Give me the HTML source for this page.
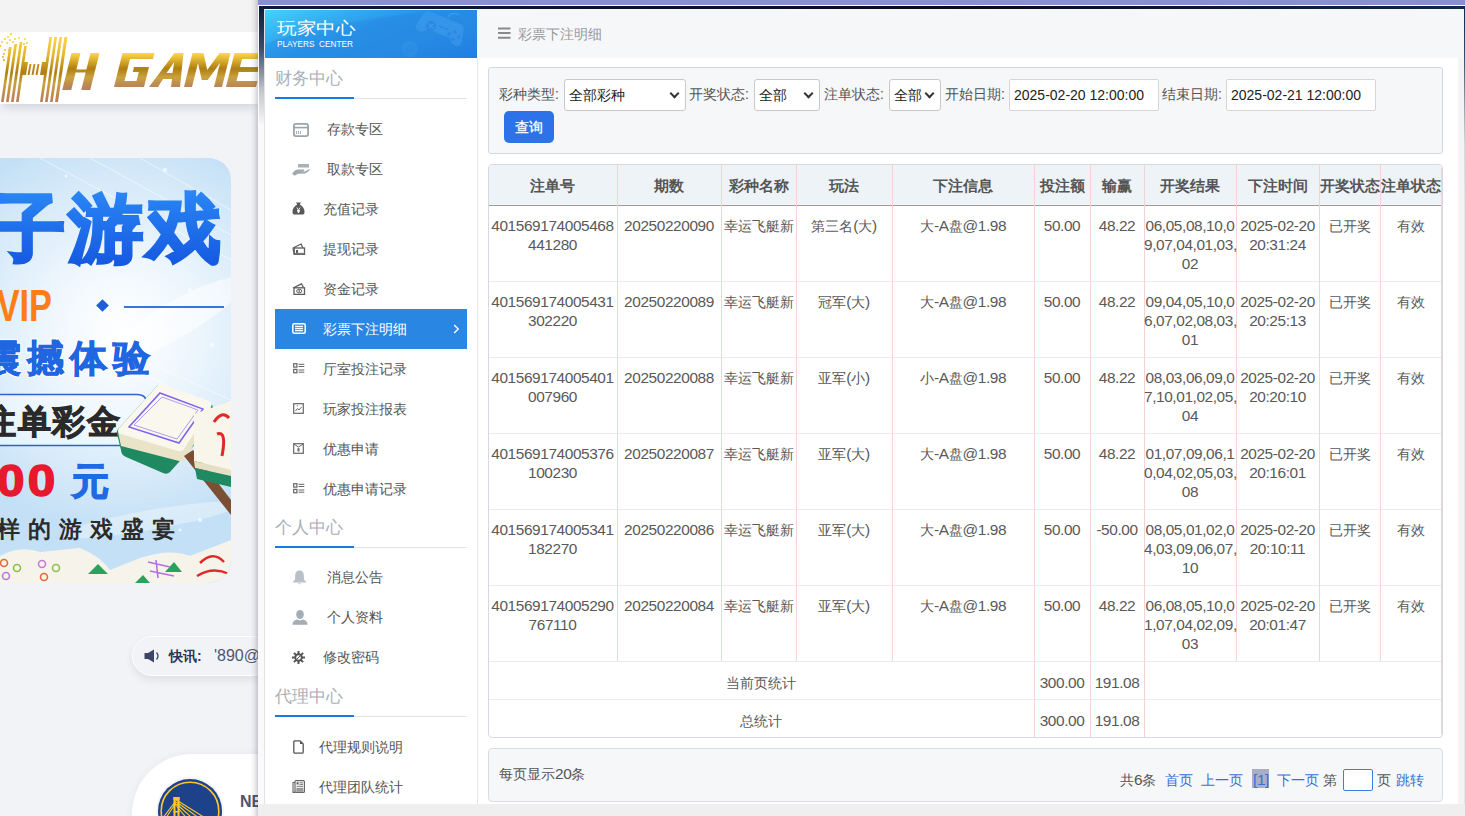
<!DOCTYPE html>
<html><head><meta charset="utf-8">
<style>
*{box-sizing:border-box;margin:0;padding:0}
html,body{width:1465px;height:816px;overflow:hidden}
body{position:relative;background:#f2f3f7;font-family:"Liberation Sans",sans-serif;font-size:14px;color:#555}
.abs{position:absolute}
/* left page */
#topgray{left:0;top:0;width:258px;height:32px;background:#f3f3f3}
#logobar{left:0;top:32px;width:258px;height:72px;background:#fff;box-shadow:0 6px 9px -3px rgba(30,30,50,.16)}
#banner{left:0;top:158px;width:231px;height:425px;border-radius:0 22px 22px 0;overflow:hidden;
  background:radial-gradient(ellipse 120px 160px at 110px 250px,#ffffff 0%,#eef6fd 45%,#cfe5f8 100%)}
#pill{left:132px;top:636px;width:140px;height:40px;border-radius:20px;background:#f2f3f7;border:1px solid #fff;box-shadow:0 4px 8px rgba(0,0,0,.08)}
#card{left:132px;top:754px;width:140px;height:120px;border-radius:60px 0 0 0;background:#fff;box-shadow:0 0 10px rgba(0,0,0,.05)}
#mshadow{left:250px;top:0;width:8px;height:816px;background:linear-gradient(to right,rgba(40,40,60,0),rgba(40,40,60,.06) 50%,rgba(40,40,60,.22))}
/* modal */
#purple{left:258px;top:0;width:1207px;height:5px;background:#8890d0}
#wline{left:258px;top:5px;width:1207px;height:1px;background:#fff}
#frame{left:258px;top:6px;width:1207px;height:810px;background:#fff}
#dtop{left:259px;top:6px;width:1206px;height:3px;background:linear-gradient(to right,#0a1a3a,#0b0f25 40%,#0a0a1a 60%,#0a2a4a)}
#dleft{left:259px;top:6px;width:5px;height:120px;background:linear-gradient(to bottom,#0a1a3a,#3a4a6a 35%,#c0c4cc 70%,#fafafa)}
#lstrip{left:258px;top:126px;width:6px;height:678px;background:#fafafa}
#lline{left:264px;top:9px;width:1px;height:795px;background:#e2e2e2}
#dright{left:1464px;top:6px;width:1px;height:800px;background:linear-gradient(to bottom,#0a2a4a 0px,#3a4a64 50px,#9aa0aa 100px,#d8d8dc 140px,#e6e6e6 200px)}
#sidebar{left:265px;top:9px;width:212px;height:795px;background:#fff}
#sbhead{left:265px;top:10px;width:212px;height:48px;overflow:hidden;
  background:linear-gradient(160deg,#45d2f7 0%,#34aef0 25%,#2a94e8 45%,#2a8fe6 70%,#2080e2 100%)}
#sbline{left:477px;top:58px;width:1px;height:746px;background:#e6e9ec}
#content{left:478px;top:9px;width:980px;height:795px;background:#fff}
#crumb{left:477px;top:9px;width:987px;height:49px;background:#f6f7f9}
#scroll{left:1458px;top:58px;width:6px;height:746px;background:#f4f4f4}
#bottomgray{left:258px;top:804px;width:1207px;height:12px;background:#efefef}
.sec{position:absolute;left:275px;font-size:17px;color:#a9b0b8;line-height:20px}
.ul{position:absolute;left:275px;width:192px;height:1px;background:#dfe2e6}
.ulb{position:absolute;left:275px;width:79px;height:2px;background:#1b7ae0}
.mi{position:absolute;font-size:14px;color:#555;line-height:16px;white-space:nowrap}
.ic{position:absolute}

.ql{color:#555}
.sel{position:absolute;top:79px;height:32px;background:#fff;border:1px solid #c9c9c9;border-radius:3px;font-size:14px;color:#222;line-height:16px}
.sel span{position:absolute;left:4px;top:7px;white-space:nowrap}
.sel:after{content:"";position:absolute;right:7px;top:10px;width:5px;height:5px;border-right:2px solid #333;border-bottom:2px solid #333;transform:rotate(45deg)}
.inp{position:absolute;top:79px;height:32px;background:#fff;border:1px solid #d6d6d6;border-radius:2px;font-size:14px;color:#222;line-height:16px;padding:7px 0 0 4px;white-space:nowrap}

.th{position:absolute;top:178px;text-align:center;font-size:14.5px;line-height:16px;font-weight:bold;color:#555;white-space:nowrap}
.td{position:absolute;text-align:center;font-size:14px;line-height:19px;color:#595959;white-space:nowrap}
.n{font-size:15.4px;letter-spacing:-0.4px;line-height:0}
</style></head><body>
<div class="abs" id="topgray"></div>
<div class="abs" id="logobar"></div>
<div class="abs" id="banner"></div>
<div class="abs" id="pill"></div>
<div class="abs" id="card"></div>

<!-- logo -->
<svg class="abs" style="left:0;top:32px" width="258" height="72" viewBox="0 32 258 72">
 <defs>
  <linearGradient id="gold" x1="0" y1="36" x2="0" y2="102" gradientUnits="userSpaceOnUse">
   <stop offset="0" stop-color="#ffd84a"/><stop offset="0.3" stop-color="#e3b52e"/><stop offset="0.55" stop-color="#b07e12"/><stop offset="0.72" stop-color="#c9a23f"/><stop offset="0.9" stop-color="#c0874f"/><stop offset="1" stop-color="#b8805c"/>
  </linearGradient>
  <linearGradient id="gold2" x1="0" y1="53" x2="0" y2="88" gradientUnits="userSpaceOnUse">
   <stop offset="0" stop-color="#ffd84a"/><stop offset="0.45" stop-color="#b07e12"/><stop offset="0.7" stop-color="#c9a23f"/><stop offset="1" stop-color="#b8805c"/>
  </linearGradient>
 </defs>
 <g fill="url(#gold)">
  <path d="M1.0 102 L3.7 102 L11.7 47 L9.0 47Z"/><path d="M6.0 102 L8.7 102 L17.1 44 L14.4 44Z"/><path d="M11.0 102 L13.7 102 L22.4 42 L19.7 42Z"/><path d="M16.0 102 L18.7 102 L26.8 46 L24.1 46Z"/>
  <path d="M40.0 102 L42.7 102 L52.1 37 L49.4 37Z"/><path d="M45.0 102 L47.7 102 L57.1 37 L54.4 37Z"/><path d="M50.0 102 L52.7 102 L62.1 37 L59.4 37Z"/><path d="M55.0 102 L58.0 102 L67.4 37 L64.4 37Z"/>
  <path d="M21 75 L23 62 L28 62 L26 75Z"/><path d="M27.5 75 L29.5 64 L31.5 64 L29.5 75Z"/><path d="M31.5 75 L33.5 64 L35.5 64 L33.5 75Z"/><path d="M35.5 75 L37.5 64 L39.5 64 L37.5 75Z"/><path d="M40 75 L42 62 L47 62 L45 75Z"/>
  <circle cx="11" cy="34" r="1.2"/><circle cx="8" cy="37" r="1.1"/><circle cx="5" cy="39" r="1.1"/><circle cx="10" cy="40" r="1"/><circle cx="15" cy="39" r="1"/><circle cx="19" cy="38" r="1"/><circle cx="25" cy="39" r="1"/><circle cx="2" cy="42" r="1"/><circle cx="7" cy="43" r="1"/><circle cx="13" cy="42" r="1"/><circle cx="24" cy="44" r="1"/><circle cx="27" cy="43" r="1"/><circle cx="0.5" cy="46" r="1"/><circle cx="5" cy="50" r="1"/><circle cx="9" cy="50" r="1"/><circle cx="4" cy="54" r="1"/><circle cx="3" cy="57" r="1"/><circle cx="4" cy="60" r="1"/>
 </g>
 <g fill="url(#gold2)" transform="translate(21.7 0) skewX(-14)">
  <!-- H -->
  <path d="M63 90 L72 90 L72 72.5 L82 72.5 L82 90 L91 90 L91 53 L82 53 L82 69.5 L72 69.5 L72 53 L63 53Z"/>
  <!-- G -->
  <path d="M114 87 L144 87 L144 67 L129 67 L129 72 L135 72 L135 81 L123 81 L123 59 L146 59 L146 53 L114 53Z"/>
  <!-- A -->
  <path d="M149 87 L158 87 L161 79 L170 79 L171 87 L180 87 L175 53 L166 53Z M163 73 L169 73 L168 62Z" fill-rule="evenodd"/>
  <!-- M -->
  <path d="M184 87 L192 87 L192 63 L200 80 L206 80 L214 63 L214 87 L222 87 L222 53 L211 53 L203 70 L195 53 L184 53Z"/>
  <!-- E -->
  <path d="M226 87 L256 87 L256 81 L235 81 L235 72 L254 72 L254 67 L235 67 L235 59 L258 59 L258 53 L226 53Z"/>
 </g>
</svg>

<!-- banner -->
<svg class="abs" style="left:0;top:158px" width="231" height="425" viewBox="0 158 231 425">
 <defs>
  <clipPath id="bclip"><path d="M0 158 H205 Q231 158 231 184 V557 Q231 583 205 583 H0Z"/></clipPath>
  <radialGradient id="bbg" cx="120" cy="330" r="200" gradientUnits="userSpaceOnUse">
   <stop offset="0" stop-color="#ffffff"/><stop offset="0.35" stop-color="#eff7fd"/><stop offset="0.75" stop-color="#d6eaf9"/><stop offset="1" stop-color="#c4e0f6"/>
  </radialGradient>
  <linearGradient id="blue" x1="0" y1="191" x2="0" y2="265" gradientUnits="userSpaceOnUse"><stop offset="0" stop-color="#2a86f5"/><stop offset="1" stop-color="#1559e0"/></linearGradient>
 </defs>
 <g clip-path="url(#bclip)">
  <rect x="0" y="158" width="231" height="425" fill="url(#bbg)"/>
  <ellipse cx="175" cy="320" rx="80" ry="18" fill="#ffffff" opacity="0.55" transform="rotate(-30 175 320)"/>
  <ellipse cx="150" cy="520" rx="90" ry="10" fill="#ffffff" opacity="0.35" transform="rotate(-10 150 520)"/>
  <g stroke="#ffffff" stroke-width="1" opacity="0.5">
   <path d="M40 158 L231 260"/><path d="M90 158 L231 235"/><path d="M140 158 L231 210"/><path d="M60 330 L231 420"/><path d="M120 350 L231 400"/>
  </g>
  <g fill="#ffffff" opacity="0.7"><circle cx="165" cy="170" r="2"/><circle cx="66" cy="176" r="1.5"/><circle cx="190" cy="290" r="2"/><circle cx="212" cy="345" r="2"/><circle cx="200" cy="520" r="2"/><circle cx="180" cy="530" r="1.5"/></g>
  <text x="-9" y="254" font-size="74" font-weight="bold" fill="url(#blue)" stroke="url(#blue)" stroke-width="3.5" letter-spacing="4">子游戏</text>
  <text x="0" y="0" font-size="44" font-weight="bold" fill="#ff7d14" text-anchor="end" font-family="Liberation Sans" transform="translate(52 321) scale(0.78 1.02)">VIP</text>
  <rect x="98" y="301" width="9" height="9" fill="#1f5fd6" transform="rotate(45 102.5 305.5)"/>
  <rect x="124" y="306" width="100" height="2" fill="#3a74d8"/>
  <text x="-16" y="371" font-size="37" font-weight="bold" fill="#1f66e0" stroke="#ffffff" stroke-width="3" paint-order="stroke" letter-spacing="6">震撼体验</text><text x="-16" y="371" font-size="37" font-weight="bold" fill="#1f66e0" stroke="#1f66e0" stroke-width="1" letter-spacing="6">震撼体验</text>
  <path d="M0 394.5 H137 Q147 394.5 147 404.5 V435.5 Q147 445.5 137 445.5 H0" fill="#f5fbff" fill-opacity="0.55" stroke="#2d62cf" stroke-width="1.6"/>
  <text x="-17" y="433" font-size="33" font-weight="bold" fill="#2a2a2a" stroke="#2a2a2a" stroke-width="1" letter-spacing="1.5">注单彩金</text>
  <text x="0" y="0" font-size="45" font-weight="bold" fill="#e8182e" stroke="#e8182e" stroke-width="1.5" font-family="Liberation Sans" letter-spacing="3" transform="translate(-3 496) scale(1.1 1)">00</text>
  <text x="72" y="494" font-size="37" font-weight="bold" fill="#1f6ae3" stroke="#1f6ae3" stroke-width="1.5">元</text>
  <text x="-3" y="537" font-size="23" font-weight="bold" fill="#2b2b2b" letter-spacing="8">样的游戏盛宴</text>
  <!-- tiles -->
  <path d="M158 385 L211 404 Q214 406 212 410 L206 432 L170 472 Q167 475 163 473 L126 457 Q121 455 121 450 L117 434 Q116 431 119 428Z" fill="#1f8a62"/>
  <path d="M118 432 L181 451 L211 404 L209 420 L183 462 L121 446Z" fill="#e9e4c8"/>
  <path d="M158 385 Q161 383 165 385 L209 401 Q213 403 211 407 L184 449 Q182 452 178 451 L121 434 Q116 432 119 428Z" fill="#faf8ee"/>
  <path d="M160 393 L203 409 L179 443 L129 427Z" fill="none" stroke="#7e64ea" stroke-width="1.5"/>
  <path d="M162 397 L198 410 L177 439 L134 425Z" fill="none" stroke="#9a85f0" stroke-width="0.8"/>
  <path d="M184 456 L193 450 L231 500 V515Z" fill="#7a4f33"/>
  <path d="M194 414 L231 401 V470 L194 461Z" fill="#f8f6ea"/>
  <path d="M194 461 L231 470 V476 L195 468Z" fill="#e5e0c4"/>
  <path d="M195 468 L231 476 V487 L197 479Z" fill="#1f8a62"/>
  <path d="M214 422 Q222 410 229 418 M217 434 Q227 430 222 456" stroke="#e02a2a" stroke-width="3" fill="none"/>
  <path d="M0 556 Q20 545 40 552 L80 548 Q100 556 110 570 L140 558 Q170 548 190 556 L231 540 V583 H0Z" fill="#f6f4ea"/>
  <path d="M88 574 L98 564 L108 574Z M165 572 L174 562 L182 572Z M135 583 L143 575 L150 583Z" fill="#29a35c"/>
  <g fill="none" stroke-width="1.6"><circle cx="4" cy="563" r="3.5" stroke="#e06a3c"/><circle cx="17" cy="568" r="3.5" stroke="#8bbf48"/><circle cx="6" cy="576" r="3.5" stroke="#b879d8"/><circle cx="42" cy="564" r="3.5" stroke="#c879d8"/><circle cx="56" cy="568" r="3.5" stroke="#8bbf48"/><circle cx="44" cy="577" r="3.5" stroke="#e06a3c"/><path d="M148 562 L170 567 M150 571 L174 576 M156 560 L158 578" stroke="#b76fe0"/><path d="M200 563 Q213 550 224 562 M197 576 Q213 566 229 574" stroke="#e02a2a" stroke-width="2.5"/></g>
 </g>
</svg>

<!-- pill -->
<svg class="ic" style="left:144px;top:649px" width="17" height="14" viewBox="0 0 17 14"><path d="M0.5 4 H4 L10 0.5 V13.5 L4 10 H0.5Z" fill="#3d4666"/><path d="M12.5 3.5 Q15.5 7 12.5 10.5" fill="none" stroke="#3d4666" stroke-width="1.3"/></svg>
<div class="mi" style="left:169px;top:648px;color:#2f3752;font-weight:bold">快讯:</div>
<div class="abs" style="left:214px;top:646px;width:44px;overflow:hidden;font-size:16px;line-height:20px;color:#4f5672;white-space:nowrap">'890@gmail</div>

<!-- card -->
<svg class="abs" style="left:150px;top:771px" width="80" height="80" viewBox="0 0 80 80">
 <circle cx="40" cy="40" r="34" fill="#f4f4f4"/>
 <circle cx="40" cy="40" r="32" fill="#1d428a"/>
 <circle cx="40" cy="40" r="28.8" fill="none" stroke="#ffc72c" stroke-width="1.6"/>
 <g fill="#ffc72c"><rect x="23.5" y="26" width="2" height="40"/><rect x="27.5" y="26" width="2" height="40"/><rect x="23.5" y="26" width="6" height="3"/><rect x="23.5" y="33" width="6" height="1.5"/><rect x="23.5" y="40" width="6" height="1.5"/></g>
 <g stroke="#ffc72c" stroke-width="1.1" fill="none"><path d="M26.5 29 L6 56"/><path d="M26.5 31 L10 56"/><path d="M26.5 29 L60 50"/><path d="M26.5 31 L56 52"/><path d="M26.5 33 L50 54"/><path d="M26.5 35 L44 56"/></g>
</svg>
<div class="abs" style="left:240px;top:793px;font-size:16px;line-height:18px;font-weight:bold;color:#50546e;white-space:nowrap;width:18px;overflow:hidden">NBA</div>

<div class="abs" id="mshadow"></div>

<div class="abs" id="purple"></div>
<div class="abs" id="wline"></div>
<div class="abs" id="frame"></div>
<div class="abs" id="dtop"></div>
<div class="abs" id="dleft"></div>
<div class="abs" id="lstrip"></div>
<div class="abs" id="lline"></div>
<div class="abs" id="dright"></div>
<div class="abs" id="sidebar"></div>
<div class="abs" id="sbhead"></div>
<div class="abs" id="sbline"></div>
<div class="abs" id="content"></div>
<div class="abs" id="crumb"></div>
<div class="abs" id="scroll"></div>
<div class="abs" id="bottomgray"></div>

<!-- sidebar header -->
<svg class="abs" style="left:265px;top:10px" width="212" height="48" viewBox="0 0 212 48">
 <path d="M0 48 L0 34 Q70 8 212 -2 L212 48 Z" fill="#1f7fe0" opacity="0.28"/>
 <g transform="rotate(22 176 18)">
  <path d="M154 12 Q155 7 162 7 L190 7 Q197 7 198 12 L200 23 Q201 29 195 29 Q191 29 188 24 L164 24 Q161 29 157 29 Q151 29 152 23Z" fill="#4aa6f0" opacity="0.4"/>
 </g>
 <circle cx="166" cy="16" r="5" fill="#2a84e0" opacity="0.75"/>
 <path d="M163.5 13.5 L168.5 18.5 M168.5 13.5 L163.5 18.5" stroke="#4aa6f0" stroke-width="1.1" opacity="0.6"/>
 <g fill="#2a84e0" opacity="0.75"><circle cx="184" cy="24" r="1.7"/><circle cx="190" cy="22" r="1.7"/><circle cx="188" cy="29" r="1.7"/><circle cx="194" cy="27" r="1.7"/><rect x="174" y="16" width="4" height="1.5" transform="rotate(22 176 17)"/><rect x="179" y="18" width="4" height="1.5" transform="rotate(22 181 19)"/></g>
 <path d="M183 7 Q187 1 194 5" stroke="#5ab0f2" stroke-width="1.2" fill="none" opacity="0.5"/>
 <circle cx="145" cy="39" r="8" fill="#4aa6f0" opacity="0.2"/>
 <circle cx="145" cy="39" r="4" fill="#2a84e0" opacity="0.25"/>
</svg>
<div class="abs" style="left:277px;top:19px;font-size:17px;line-height:20px;color:#fff;transform:scaleX(1.15);transform-origin:0 0;white-space:nowrap">玩家中心</div>
<div class="abs" style="left:277px;top:39px;font-size:8.6px;line-height:10px;color:#fff;font-weight:normal;white-space:nowrap;transform:scaleX(0.96);transform-origin:0 0;">PLAYERS&nbsp; CENTER</div>

<!-- sections -->
<div class="sec" style="top:69px">财务中心</div>
<div class="ul" style="top:98px"></div><div class="ulb" style="top:97px"></div>

<svg class="ic" style="left:293px;top:123px" width="16" height="14" viewBox="0 0 16 14"><rect x="0.9" y="0.9" width="14.2" height="12.2" rx="2" fill="none" stroke="#9aa3ab" stroke-width="1.8"/><line x1="1" y1="4.6" x2="15" y2="4.6" stroke="#9aa3ab" stroke-width="1.6"/><path d="M3.6 8v3M5.6 8v3M7.6 8v3" stroke="#9aa3ab" stroke-width="0.9"/></svg>
<div class="mi" style="left:327px;top:121px">存款专区</div>

<svg class="ic" style="left:291px;top:163px" width="20" height="13" viewBox="0 0 20 13"><rect x="7" y="1" width="11" height="3.5" fill="#a8b0b8"/><path d="M1 10.5 L4 7.5 Q6 6 9 6.5 L13 6.5 Q14 7.5 12.5 8.2 L9 8.4 L14 8.4 L18.5 6 L19 6.5 Q17 9.5 14 10.5 L7 10.8 L3.5 12.8 Z" fill="#a0a8b0"/></svg>
<div class="mi" style="left:327px;top:161px">取款专区</div>

<svg class="ic" style="left:292px;top:202px" width="13" height="13" viewBox="0 0 13 13"><path d="M4 0.5 L9 0.5 L7.8 2.5 Q12.5 5 12.5 10 Q12.5 12.6 10 12.6 L3 12.6 Q0.5 12.6 0.5 10 Q0.5 5 5.2 2.5 Z" fill="#595959"/><path d="M4.8 5.5 L6.5 8 L8.2 5.5 M6.5 8 V11 M5 8.5 H8 M5 9.8 H8" stroke="#fff" stroke-width="0.9" fill="none"/></svg>
<div class="mi" style="left:323px;top:201px">充值记录</div>

<svg class="ic" style="left:292px;top:243px" width="14" height="12" viewBox="0 0 14 12"><path d="M1 5 L9 1 L11 5" fill="none" stroke="#5c5c5c" stroke-width="1.3"/><rect x="2.2" y="5" width="10.3" height="6.3" fill="none" stroke="#5c5c5c" stroke-width="1.3"/><path d="M1 5 L2.2 11.3" stroke="#5c5c5c" stroke-width="1.2"/><rect x="4" y="7" width="2" height="3" fill="#5c5c5c"/><line x1="3" y1="10.6" x2="12" y2="10.6" stroke="#777" stroke-width="1.4"/></svg>
<div class="mi" style="left:323px;top:241px">提现记录</div>

<svg class="ic" style="left:292px;top:283px" width="14" height="12" viewBox="0 0 14 12"><path d="M1 5 L9.5 0.8 L11.5 4.5" fill="none" stroke="#5c5c5c" stroke-width="1.3"/><rect x="2" y="4.8" width="10.5" height="6.6" fill="none" stroke="#5c5c5c" stroke-width="1.3"/><ellipse cx="7.2" cy="8.1" rx="2.6" ry="1.9" fill="none" stroke="#5c5c5c" stroke-width="1"/><rect x="6.6" y="7" width="1.2" height="2.2" fill="#5c5c5c"/></svg>
<div class="mi" style="left:323px;top:281px">资金记录</div>

<div class="abs" style="left:275px;top:309px;width:192px;height:40px;background:#2a86e3"></div>
<svg class="ic" style="left:292px;top:323px" width="14" height="11" viewBox="0 0 14 11"><rect x="0.8" y="0.8" width="12.4" height="9.4" rx="1.5" fill="none" stroke="#fff" stroke-width="1.5"/><path d="M3 3.4H11M3 5.5H11M3 7.6H11" stroke="#fff" stroke-width="1.3"/></svg>
<div class="mi" style="left:323px;top:321px;color:#fff">彩票下注明细</div>
<svg class="ic" style="left:453px;top:324px" width="7" height="10" viewBox="0 0 7 10"><path d="M1.2 1 L5.2 5 L1.2 9" fill="none" stroke="#fff" stroke-width="1.4"/></svg>

<svg class="ic" style="left:293px;top:363px" width="12" height="11" viewBox="0 0 12 11"><rect x="0.7" y="0.7" width="3.2" height="3.4" fill="none" stroke="#666" stroke-width="1.2"/><rect x="0.7" y="6.4" width="3.2" height="3.4" fill="none" stroke="#666" stroke-width="1.2"/><path d="M5.6 1.3H11.3M5.6 3.5H11.3M5.6 7H11.3M5.6 9.2H11.3" stroke="#666" stroke-width="1"/></svg>
<div class="mi" style="left:323px;top:361px">厅室投注记录</div>

<svg class="ic" style="left:293px;top:403px" width="11" height="11" viewBox="0 0 11 11"><rect x="0.7" y="0.7" width="9.6" height="9.6" fill="none" stroke="#666" stroke-width="1.2"/><path d="M2.5 8 L4.5 5.5 L6 7 L8.6 4" fill="none" stroke="#666" stroke-width="1"/><circle cx="4.3" cy="2.8" r="0.6" fill="#666"/></svg>
<div class="mi" style="left:323px;top:401px">玩家投注报表</div>

<svg class="ic" style="left:293px;top:443px" width="11" height="11" viewBox="0 0 11 11"><rect x="0.7" y="0.7" width="9.6" height="9.6" fill="none" stroke="#666" stroke-width="1.2"/><path d="M1 1.2 L5.5 4 L10 1.2" fill="none" stroke="#666" stroke-width="1"/><ellipse cx="5.5" cy="6.8" rx="1.3" ry="2" fill="#777"/></svg>
<div class="mi" style="left:323px;top:441px">优惠申请</div>

<svg class="ic" style="left:293px;top:483px" width="12" height="11" viewBox="0 0 12 11"><rect x="0.7" y="0.7" width="3.2" height="3.4" fill="none" stroke="#666" stroke-width="1.2"/><rect x="0.7" y="6.4" width="3.2" height="3.4" fill="none" stroke="#666" stroke-width="1.2"/><path d="M5.6 1.3H11.3M5.6 3.5H11.3M5.6 7H11.3M5.6 9.2H11.3" stroke="#666" stroke-width="1"/></svg>
<div class="mi" style="left:323px;top:481px">优惠申请记录</div>

<div class="sec" style="top:518px">个人中心</div>
<div class="ul" style="top:547px"></div><div class="ulb" style="top:546px"></div>

<svg class="ic" style="left:292px;top:570px" width="15" height="15" viewBox="0 0 15 15"><path d="M7.5 0.5 Q11.5 0.5 11.8 5 L12 9.5 L14.5 12.5 L0.5 12.5 L3 9.5 L3.2 5 Q3.5 0.5 7.5 0.5Z" fill="#b9c0c7"/><path d="M6 13.3 H9 L7.5 14.5Z" fill="#b9c0c7"/></svg>
<div class="mi" style="left:327px;top:569px">消息公告</div>

<svg class="ic" style="left:292px;top:610px" width="16" height="15" viewBox="0 0 16 15"><ellipse cx="8" cy="4.5" rx="3.8" ry="4.5" fill="#a3adb6"/><path d="M0.5 14.8 Q0.5 10.5 5 9.6 L8 10.5 L11 9.6 Q15.5 10.5 15.5 14.8Z" fill="#a3adb6"/></svg>
<div class="mi" style="left:327px;top:609px">个人资料</div>

<svg class="ic" style="left:292px;top:651px" width="13" height="13" viewBox="0 0 13 13"><g fill="#555"><circle cx="6.5" cy="6.5" r="4.2"/><rect x="5.5" y="0" width="2" height="13"/><rect x="0" y="5.5" width="13" height="2"/><rect x="5.5" y="0" width="2" height="13" transform="rotate(45 6.5 6.5)"/><rect x="5.5" y="0" width="2" height="13" transform="rotate(-45 6.5 6.5)"/></g><circle cx="6.5" cy="6.5" r="2.3" fill="#fff"/><path d="M5 8 L8 5" stroke="#555" stroke-width="1"/></svg>
<div class="mi" style="left:323px;top:649px">修改密码</div>

<div class="sec" style="top:687px">代理中心</div>
<div class="ul" style="top:716px"></div><div class="ulb" style="top:715px"></div>

<svg class="ic" style="left:293px;top:740px" width="11" height="14" viewBox="0 0 11 14"><path d="M1.7 0.8 H7 L10.2 4 V12 Q10.2 13.2 9 13.2 H1.9 Q0.8 13.2 0.8 12 V1.9 Q0.8 0.8 1.7 0.8Z" fill="none" stroke="#555" stroke-width="1.3"/><path d="M7 0.8 V4 H10.2Z" fill="#555"/></svg>
<div class="mi" style="left:319px;top:739px">代理规则说明</div>

<svg class="ic" style="left:292px;top:780px" width="13" height="13" viewBox="0 0 13 13"><rect x="3" y="0.6" width="9.4" height="11.8" rx="1" fill="none" stroke="#666" stroke-width="1.2"/><path d="M3 2.5 H1 V12.4 H3" fill="none" stroke="#666" stroke-width="1.1"/><rect x="4.6" y="2.3" width="2" height="2.2" fill="#555"/><path d="M7.5 2.8H11M7.5 4.4H11M4.5 6.3H11" stroke="#666" stroke-width="0.9"/><rect x="4.3" y="7.8" width="7" height="4" fill="#999"/></svg>
<div class="mi" style="left:319px;top:779px">代理团队统计</div>



<!-- crumb -->
<svg class="ic" style="left:498px;top:27px" width="13" height="12" viewBox="0 0 13 12"><path d="M0 1.5H12.5M0 6H12.5M0 10.8H12.5" stroke="#8a8a8a" stroke-width="2"/></svg>
<div class="mi" style="left:518px;top:26px;color:#999">彩票下注明细</div>

<!-- query -->
<div class="abs" style="left:488px;top:67px;width:955px;height:87px;background:#f6f7f9;border:1px solid #d3d9df;border-radius:3px"></div>
<div class="mi ql" style="left:499px;top:86px">彩种类型:</div>
<div class="sel" style="left:564px;width:122px"><span>全部彩种</span></div>
<div class="mi ql" style="left:689px;top:86px">开奖状态:</div>
<div class="sel" style="left:754px;width:66px"><span>全部</span></div>
<div class="mi ql" style="left:824px;top:86px">注单状态:</div>
<div class="sel" style="left:889px;width:52px"><span>全部</span></div>
<div class="mi ql" style="left:945px;top:86px">开始日期:</div>
<div class="inp" style="left:1009px;width:150px">2025-02-20 12:00:00</div>
<div class="mi ql" style="left:1162px;top:86px">结束日期:</div>
<div class="inp" style="left:1226px;width:150px">2025-02-21 12:00:00</div>
<div class="abs" style="left:504px;top:111px;width:50px;height:32px;background:#2d72e8;border-radius:5px"></div>
<div class="mi" style="left:515px;top:119px;color:#fff;-webkit-text-stroke:0.3px #fff">查询</div>
<!--TABLE-->
<div class="abs" style="left:488px;top:164px;width:955px;height:574px;border:1px solid #d3d9de;border-radius:4px;background:#fff;overflow:hidden">
<div class="abs" style="left:0;top:0;width:953px;height:40px;background:#eef3f7"></div>
</div>
<div class="abs" style="left:489px;top:204px;width:952px;height:1px;background:#f5f8fb"></div>
<div class="abs" style="left:489px;top:205px;width:952px;height:1px;background:#9e9797"></div>
<div class="abs" style="left:489px;top:281px;width:952px;height:1px;background:#ebebeb"></div>
<div class="abs" style="left:489px;top:357px;width:952px;height:1px;background:#ebebeb"></div>
<div class="abs" style="left:489px;top:433px;width:952px;height:1px;background:#ebebeb"></div>
<div class="abs" style="left:489px;top:509px;width:952px;height:1px;background:#ebebeb"></div>
<div class="abs" style="left:489px;top:585px;width:952px;height:1px;background:#ebebeb"></div>
<div class="abs" style="left:489px;top:661px;width:952px;height:1px;background:#ebebeb"></div>
<div class="abs" style="left:489px;top:699px;width:952px;height:1px;background:#ebebeb"></div>
<div class="abs" style="left:617px;top:165px;width:1px;height:496px;background:#f3d3d5"></div>
<div class="abs" style="left:721px;top:165px;width:1px;height:496px;background:#f3d3d5"></div>
<div class="abs" style="left:796px;top:165px;width:1px;height:496px;background:#f3d3d5"></div>
<div class="abs" style="left:892px;top:165px;width:1px;height:496px;background:#f3d3d5"></div>
<div class="abs" style="left:1034px;top:165px;width:1px;height:572px;background:#f3d3d5"></div>
<div class="abs" style="left:1090px;top:165px;width:1px;height:572px;background:#f3d3d5"></div>
<div class="abs" style="left:1144px;top:165px;width:1px;height:572px;background:#f3d3d5"></div>
<div class="abs" style="left:1236px;top:165px;width:1px;height:496px;background:#f3d3d5"></div>
<div class="abs" style="left:1319px;top:165px;width:1px;height:496px;background:#f3d3d5"></div>
<div class="abs" style="left:1380px;top:165px;width:1px;height:496px;background:#f3d3d5"></div>
<div class="abs" style="left:1441px;top:168px;width:1px;height:566px;background:#ecd6d9"></div>
<div class="th" style="left:488px;width:129px">注单号</div>
<div class="th" style="left:617px;width:104px">期数</div>
<div class="th" style="left:721px;width:75px">彩种名称</div>
<div class="th" style="left:796px;width:96px">玩法</div>
<div class="th" style="left:892px;width:142px">下注信息</div>
<div class="th" style="left:1034px;width:56px">投注额</div>
<div class="th" style="left:1090px;width:54px">输赢</div>
<div class="th" style="left:1144px;width:92px">开奖结果</div>
<div class="th" style="left:1236px;width:83px">下注时间</div>
<div class="th" style="left:1319px;width:61px">开奖状态</div>
<div class="th" style="left:1380px;width:61px">注单状态</div>
<div class="td" style="left:488px;width:129px;top:217px"><span class="n">401569174005468</span><br><span class="n">441280</span></div>
<div class="td" style="left:617px;width:104px;top:217px"><span class="n">20250220090</span></div>
<div class="td" style="left:721px;width:75px;top:217px">幸运飞艇新</div>
<div class="td" style="left:796px;width:96px;top:217px">第三名<span class="n">(</span>大<span class="n">)</span></div>
<div class="td" style="left:892px;width:142px;top:217px">大<span class="n">-A</span>盘<span class="n">@1.98</span></div>
<div class="td" style="left:1034px;width:56px;top:217px"><span class="n">50.00</span></div>
<div class="td" style="left:1090px;width:54px;top:217px"><span class="n">48.22</span></div>
<div class="td" style="left:1144px;width:92px;top:217px"><span class="n">06,05,08,10,0</span><br><span class="n">9,07,04,01,03,</span><br><span class="n">02</span></div>
<div class="td" style="left:1236px;width:83px;top:217px"><span class="n">2025-02-20</span><br><span class="n">20:31:24</span></div>
<div class="td" style="left:1319px;width:61px;top:217px">已开奖</div>
<div class="td" style="left:1380px;width:61px;top:217px">有效</div>
<div class="td" style="left:488px;width:129px;top:293px"><span class="n">401569174005431</span><br><span class="n">302220</span></div>
<div class="td" style="left:617px;width:104px;top:293px"><span class="n">20250220089</span></div>
<div class="td" style="left:721px;width:75px;top:293px">幸运飞艇新</div>
<div class="td" style="left:796px;width:96px;top:293px">冠军<span class="n">(</span>大<span class="n">)</span></div>
<div class="td" style="left:892px;width:142px;top:293px">大<span class="n">-A</span>盘<span class="n">@1.98</span></div>
<div class="td" style="left:1034px;width:56px;top:293px"><span class="n">50.00</span></div>
<div class="td" style="left:1090px;width:54px;top:293px"><span class="n">48.22</span></div>
<div class="td" style="left:1144px;width:92px;top:293px"><span class="n">09,04,05,10,0</span><br><span class="n">6,07,02,08,03,</span><br><span class="n">01</span></div>
<div class="td" style="left:1236px;width:83px;top:293px"><span class="n">2025-02-20</span><br><span class="n">20:25:13</span></div>
<div class="td" style="left:1319px;width:61px;top:293px">已开奖</div>
<div class="td" style="left:1380px;width:61px;top:293px">有效</div>
<div class="td" style="left:488px;width:129px;top:369px"><span class="n">401569174005401</span><br><span class="n">007960</span></div>
<div class="td" style="left:617px;width:104px;top:369px"><span class="n">20250220088</span></div>
<div class="td" style="left:721px;width:75px;top:369px">幸运飞艇新</div>
<div class="td" style="left:796px;width:96px;top:369px">亚军<span class="n">(</span>小<span class="n">)</span></div>
<div class="td" style="left:892px;width:142px;top:369px">小<span class="n">-A</span>盘<span class="n">@1.98</span></div>
<div class="td" style="left:1034px;width:56px;top:369px"><span class="n">50.00</span></div>
<div class="td" style="left:1090px;width:54px;top:369px"><span class="n">48.22</span></div>
<div class="td" style="left:1144px;width:92px;top:369px"><span class="n">08,03,06,09,0</span><br><span class="n">7,10,01,02,05,</span><br><span class="n">04</span></div>
<div class="td" style="left:1236px;width:83px;top:369px"><span class="n">2025-02-20</span><br><span class="n">20:20:10</span></div>
<div class="td" style="left:1319px;width:61px;top:369px">已开奖</div>
<div class="td" style="left:1380px;width:61px;top:369px">有效</div>
<div class="td" style="left:488px;width:129px;top:445px"><span class="n">401569174005376</span><br><span class="n">100230</span></div>
<div class="td" style="left:617px;width:104px;top:445px"><span class="n">20250220087</span></div>
<div class="td" style="left:721px;width:75px;top:445px">幸运飞艇新</div>
<div class="td" style="left:796px;width:96px;top:445px">亚军<span class="n">(</span>大<span class="n">)</span></div>
<div class="td" style="left:892px;width:142px;top:445px">大<span class="n">-A</span>盘<span class="n">@1.98</span></div>
<div class="td" style="left:1034px;width:56px;top:445px"><span class="n">50.00</span></div>
<div class="td" style="left:1090px;width:54px;top:445px"><span class="n">48.22</span></div>
<div class="td" style="left:1144px;width:92px;top:445px"><span class="n">01,07,09,06,1</span><br><span class="n">0,04,02,05,03,</span><br><span class="n">08</span></div>
<div class="td" style="left:1236px;width:83px;top:445px"><span class="n">2025-02-20</span><br><span class="n">20:16:01</span></div>
<div class="td" style="left:1319px;width:61px;top:445px">已开奖</div>
<div class="td" style="left:1380px;width:61px;top:445px">有效</div>
<div class="td" style="left:488px;width:129px;top:521px"><span class="n">401569174005341</span><br><span class="n">182270</span></div>
<div class="td" style="left:617px;width:104px;top:521px"><span class="n">20250220086</span></div>
<div class="td" style="left:721px;width:75px;top:521px">幸运飞艇新</div>
<div class="td" style="left:796px;width:96px;top:521px">亚军<span class="n">(</span>大<span class="n">)</span></div>
<div class="td" style="left:892px;width:142px;top:521px">大<span class="n">-A</span>盘<span class="n">@1.98</span></div>
<div class="td" style="left:1034px;width:56px;top:521px"><span class="n">50.00</span></div>
<div class="td" style="left:1090px;width:54px;top:521px"><span class="n">-50.00</span></div>
<div class="td" style="left:1144px;width:92px;top:521px"><span class="n">08,05,01,02,0</span><br><span class="n">4,03,09,06,07,</span><br><span class="n">10</span></div>
<div class="td" style="left:1236px;width:83px;top:521px"><span class="n">2025-02-20</span><br><span class="n">20:10:11</span></div>
<div class="td" style="left:1319px;width:61px;top:521px">已开奖</div>
<div class="td" style="left:1380px;width:61px;top:521px">有效</div>
<div class="td" style="left:488px;width:129px;top:597px"><span class="n">401569174005290</span><br><span class="n">767110</span></div>
<div class="td" style="left:617px;width:104px;top:597px"><span class="n">20250220084</span></div>
<div class="td" style="left:721px;width:75px;top:597px">幸运飞艇新</div>
<div class="td" style="left:796px;width:96px;top:597px">亚军<span class="n">(</span>大<span class="n">)</span></div>
<div class="td" style="left:892px;width:142px;top:597px">大<span class="n">-A</span>盘<span class="n">@1.98</span></div>
<div class="td" style="left:1034px;width:56px;top:597px"><span class="n">50.00</span></div>
<div class="td" style="left:1090px;width:54px;top:597px"><span class="n">48.22</span></div>
<div class="td" style="left:1144px;width:92px;top:597px"><span class="n">06,08,05,10,0</span><br><span class="n">1,07,04,02,09,</span><br><span class="n">03</span></div>
<div class="td" style="left:1236px;width:83px;top:597px"><span class="n">2025-02-20</span><br><span class="n">20:01:47</span></div>
<div class="td" style="left:1319px;width:61px;top:597px">已开奖</div>
<div class="td" style="left:1380px;width:61px;top:597px">有效</div>
<div class="td" style="left:488px;width:546px;top:674px">当前页统计</div>
<div class="td" style="left:1034px;width:56px;top:674px"><span class="n">300.00</span></div>
<div class="td" style="left:1090px;width:54px;top:674px"><span class="n">191.08</span></div>
<div class="td" style="left:488px;width:546px;top:712px">总统计</div>
<div class="td" style="left:1034px;width:56px;top:712px"><span class="n">300.00</span></div>
<div class="td" style="left:1090px;width:54px;top:712px"><span class="n">191.08</span></div>
<div class="abs" style="left:488px;top:748px;width:955px;height:54px;background:#f6f7f9;border:1px solid #d9dde2;border-radius:4px"></div>
<div class="mi" style="left:499px;top:766px;color:#555">每页显示<span class="n">20</span>条</div>
<div class="mi" style="left:1120px;top:772px;color:#555">共<span class="n">6</span>条</div>
<div class="mi" style="left:1165px;top:772px;color:#3a6fd8">首页</div>
<div class="mi" style="left:1201px;top:772px;color:#3a6fd8">上一页</div>
<div class="abs" style="left:1252px;top:769px;width:17px;height:19px;background:#a9aec6"></div>
<div class="mi" style="left:1253px;top:772px;color:#3a6fd8"><span class="n">[1]</span></div>
<div class="mi" style="left:1277px;top:772px;color:#3a6fd8">下一页</div>
<div class="mi" style="left:1323px;top:772px;color:#555">第</div>
<div class="abs" style="left:1343px;top:769px;width:30px;height:22px;background:#fff;border:1px solid #3d7de2;border-radius:2px"></div>
<div class="mi" style="left:1377px;top:772px;color:#555">页</div>
<div class="mi" style="left:1396px;top:772px;color:#3a6fd8">跳转</div>
<!--/TABLE-->
</body></html>
